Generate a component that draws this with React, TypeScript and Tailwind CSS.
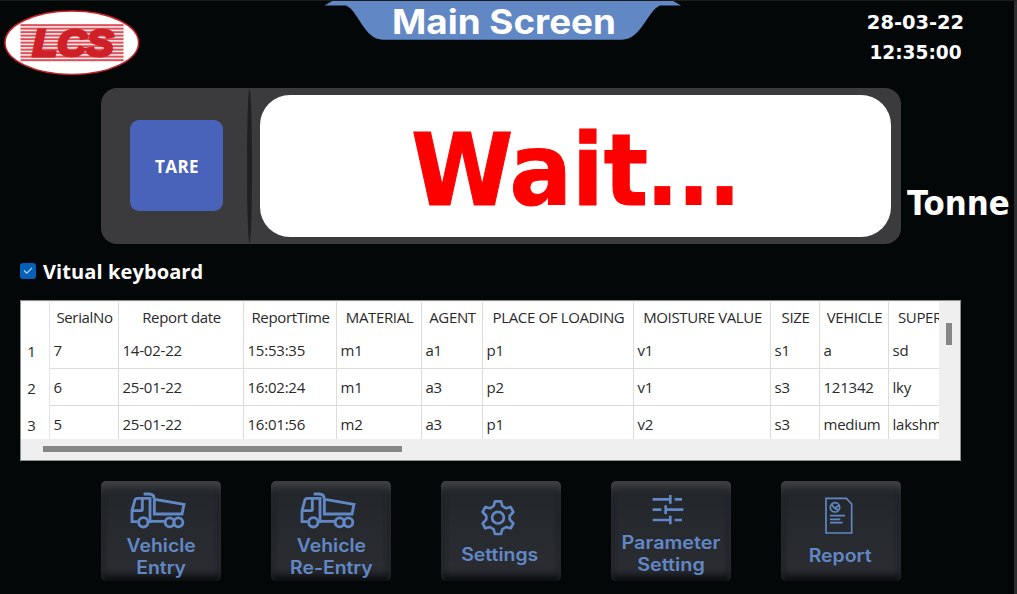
import type { ReactNode } from 'react';

const columns = [
  { name: 'SerialNo', values: ['7', '6', '5'] },
  { name: 'Report date', values: ['14-02-22', '25-01-22', '25-01-22'] },
  { name: 'ReportTime', values: ['15:53:35', '16:02:24', '16:01:56'] },
  { name: 'MATERIAL', values: ['m1', 'm1', 'm2'] },
  { name: 'AGENT', values: ['a1', 'a3', 'a3'] },
  { name: 'PLACE OF LOADING', values: ['p1', 'p2', 'p1'] },
  { name: 'MOISTURE VALUE', values: ['v1', 'v1', 'v2'] },
  { name: 'SIZE', values: ['s1', 's3', 's3'] },
  { name: 'VEHICLE', values: ['a', '121342', 'medium'] },
  { name: 'SUPER', values: ['sd', 'lky', 'lakshm'] },
];

function Logo() {
  return (
    <svg className="ml-1 mt-[9px] h-[67px] w-[136px]" viewBox="4 9 136 67">
      <ellipse cx="71.8" cy="42.7" rx="66.8" ry="31.8" fill="#fff" stroke="#cf2027" strokeWidth="1.5" />
      <rect x="20.5" y="24" width="103" height="37.8" fill="#fbe9ea" />
      {[24.2, 27.7, 31.2, 34.7, 38.2, 41.7, 45.2, 48.7, 52.2, 55.7, 59.2].map((y) => (
        <rect key={y} x="20.5" y={y} width="103" height="1.9" fill="#dc4f57" />
      ))}
      <text
        x="32.5"
        y="56"
        textLength="81"
        lengthAdjust="spacingAndGlyphs"
        fill="#cf2027"
        stroke="#cf2027"
        strokeWidth="3"
        className="font-['Liberation_Sans',sans-serif] text-[36.5px] font-bold italic"
      >
        LCS
      </text>
    </svg>
  );
}

function Title() {
  return (
    <div className="relative ml-[184px] h-[41px] w-[358px]">
      <svg className="absolute inset-0 h-[41px] w-[358px]" viewBox="324 0 358 41">
        <path d="M324.5 5.5L334 0H671.5L681 5.5H660C648 10 641 39.7 622 39.7H383C364 39.7 358 10 346 5.5Z" fill="#6188c5" />
      </svg>
      <h1 className="relative ml-[68px] w-fit origin-left scale-x-[1.083] pt-px font-['Inter',sans-serif] text-[34px] leading-[42px] font-bold whitespace-nowrap text-white">
        Main Screen
      </h1>
    </div>
  );
}

function TruckIcon() {
  return (
    <svg className="h-[37px] w-[56px]" viewBox="119 65 168 111" fill="none" stroke="#6188c5" strokeWidth="8.5">
      <path d="M142 154H125V121L134 88Q136 84 141 84H179V154H176" />
      <path d="M156 85V119Q156 121 153 121H126" />
      <path d="M160 71H176Q192 71 192 87V131H275L281 102L194 87" />
      <path d="M177 153H223" />
      <circle cx="159" cy="156" r="14" />
      <circle cx="238" cy="156" r="13.5" />
      <circle cx="264" cy="156" r="13.5" />
    </svg>
  );
}

function GearIcon() {
  return (
    <svg className="h-[37px] w-[36px]" viewBox="149 87 108 111" fill="none" stroke="#6188c5" strokeWidth="8" strokeLinejoin="round">
      <path d="M194 94H212L216 108L227 115L241 111L249 126L238 138V148L249 160L241 175L227 171L216 178L212 192H194L190 178L179 171L165 175L157 160L168 148V138L157 126L165 111L179 115L190 108Z" />
      <circle cx="203" cy="143" r="17.5" />
    </svg>
  );
}

function SlidersIcon() {
  return (
    <svg className="h-[31px] w-[32px]" viewBox="666 73 96 93" fill="none" stroke="#6188c5" strokeWidth="8">
      <path d="M668 89H721M734 89H756M668 120H694M707 120H760M668 151H721M734 151H756" />
      <path d="M721 76V102M707 107V133M721 138V164" />
    </svg>
  );
}

function ReportIcon() {
  return (
    <svg className="h-[38px] w-[28px]" viewBox="165 83 84 114" fill="none" stroke="#6188c5" strokeWidth="5">
      <path d="M168 87H229L245 104V191H168Z" />
      <circle cx="195" cy="114" r="14" />
      <path d="M186 103Q188 117 206 122M196 115L208 108" />
      <path d="M180 139H225M180 150H211M180 160H218" />
    </svg>
  );
}

function MenuButton({ icon, className, children }: { icon: ReactNode; className: string; children: ReactNode }) {
  return (
    <button
      className={`flex h-[100px] w-[120px] flex-col items-center rounded-[5px] bg-linear-to-b from-[#22262a] to-[#2b2d33] text-center font-['Inter',sans-serif] text-[18px] leading-[21.5px] font-semibold whitespace-nowrap text-[#6188c5] shadow-[inset_0_7px_7px_-1px_#414145,inset_0_-8px_7px_-2px_#0d0f12,inset_0_0_6px_#111416] ${className}`}
    >
      {icon}
      {children}
    </button>
  );
}

function ReportTable() {
  return (
    <div className="ml-5 flex h-[161px] w-[941px] flex-col border border-[#8f8f8f] bg-[#efefef] pt-px font-['Open_Sans',sans-serif] text-[15px] text-[#2a2a2a]">
      <div className="flex h-[137px]">
        <div className="grid w-[918px] shrink-0 grid-cols-[29px_69px_125px_93px_85px_61px_151px_137px_49px_69px_50px] overflow-hidden bg-white">
          <div className="border-r border-[#e4e4e4] text-center leading-[37px]">
            <div className="h-[31px]" />
            {[1, 2, 3].map((n) => (
              <div key={n} className="h-[37px] pr-[7px]">{n}</div>
            ))}
          </div>
          {columns.map((column, index) => (
            <div key={column.name} className={`min-w-0 ${index < columns.length - 1 ? 'border-r border-[#dcdcdc]' : ''}`}>
              <div className={`h-[30px] leading-[31px] tracking-[-0.36px] whitespace-nowrap ${index < columns.length - 1 ? 'text-center pl-px' : 'pl-[9px]'}`}>
                {column.name}
              </div>
              {column.values.map((value, row) => (
                <div key={row} className="h-[37px] border-b border-[#dcdcdc] pl-[3.5px] leading-[37px] tracking-[-0.22px] whitespace-nowrap">
                  {value}
                </div>
              ))}
            </div>
          ))}
        </div>
        <div className="ml-[7px] mt-[21px] h-[22px] w-[6px] bg-[#868686]" />
      </div>
      <div className="ml-[22px] mt-[7px] h-[6px] w-[359px] bg-[#868686]" />
    </div>
  );
}

export default function App() {
  return (
    <main className="flex h-[594px] w-[1017px] flex-col overflow-hidden border-t border-r-3 border-t-[#1b1c1c] border-r-[#2c2c2d] bg-[#030708]">
      <header className="-mt-px flex h-[88px]">
        <Logo />
        <Title />
        <div className="ml-[183px] w-[101px] pt-[7px] text-center font-['DejaVu_Sans_Condensed','DejaVu_Sans',sans-serif] text-[20px] leading-[30px] font-bold whitespace-nowrap text-white">
          <div className="scale-x-[1.08]">28-03-22</div>
          <div className="scale-x-[1.03]">12:35:00</div>
        </div>
      </header>

      <section className="flex h-[156px]">
        <div className="ml-[101px] flex h-[156px] w-[800px] rounded-[16px] bg-[#3b3a3c]">
          <button className="ml-[29px] mt-[32px] h-[91px] w-[93px] rounded-[9px] bg-[#4963bb] pt-0.5 pl-px font-['Open_Sans',sans-serif] text-[17px] font-bold tracking-[0.4px] text-white">
            TARE
          </button>
          <div className="ml-[24px] mt-px h-[154px] w-[5px] rounded-[50%] bg-[#1f1f20]" />
          <div className="ml-[8px] mt-[7px] h-[142px] w-[631px] rounded-[30px] bg-white pl-[151px] font-['DejaVu_Sans_Condensed','DejaVu_Sans',sans-serif] text-[100px] leading-[151px] font-bold whitespace-nowrap text-[#ff0000]">
            <span className="inline-block origin-left scale-x-[1.03] [-webkit-text-stroke:1px_#ff0000]">Wait</span>
            <span className="ml-[4px] tracking-[-3px]">...</span>
          </div>
        </div>
        <div className="ml-[6px] mt-[95px] origin-left scale-x-[1.04] pt-px font-['DejaVu_Sans_Condensed','DejaVu_Sans',sans-serif] text-[33px] leading-[40px] font-bold text-white">
          Tonne
        </div>
      </section>

      <label className="ml-5 flex h-[56px] items-center">
        <span className="mb-[3px] flex h-4 w-4 items-center justify-center rounded-[3px] bg-[#0560b8]">
          <svg className="h-[9px] w-[10px]" viewBox="0 0 10 9" fill="none" stroke="#b9d6f0" strokeWidth="1.2">
            <path d="M1 4.5L3.8 7.2L9 1.8" />
          </svg>
        </span>
        <span className="ml-[7px] font-['Open_Sans',sans-serif] text-[20px] font-bold tracking-[0.1px] text-white">Vitual keyboard</span>
      </label>

      <ReportTable />

      <nav className="ml-[101px] mt-5 flex gap-[50px]">
        <MenuButton className="pt-[11px]" icon={<span className="mb-[6px] mr-[7px]"><TruckIcon /></span>}>
          <span className="scale-x-[1.075]">Vehicle<br />Entry</span>
        </MenuButton>
        <MenuButton className="pt-[11px]" icon={<span className="mb-[6px] mr-[7px]"><TruckIcon /></span>}>
          <span className="scale-x-[1.075]">Vehicle<br />Re-Entry</span>
        </MenuButton>
        <MenuButton className="pt-[18px]" icon={<span className="mb-[8px] mr-[6px]"><GearIcon /></span>}>
          <span className="mr-[2px] scale-x-[1.08]">Settings</span>
        </MenuButton>
        <MenuButton className="pt-[13px]" icon={<span className="mb-[7px] mr-[6px]"><SlidersIcon /></span>}>
          <span className="scale-x-[1.1]">Parameter<br />Setting</span>
        </MenuButton>
        <MenuButton className="pt-[16px]" icon={<span className="mb-[10px] mr-[4px]"><ReportIcon /></span>}>
          <span className="mr-[2px] scale-x-[1.08]">Report</span>
        </MenuButton>
      </nav>
    </main>
  );
}
